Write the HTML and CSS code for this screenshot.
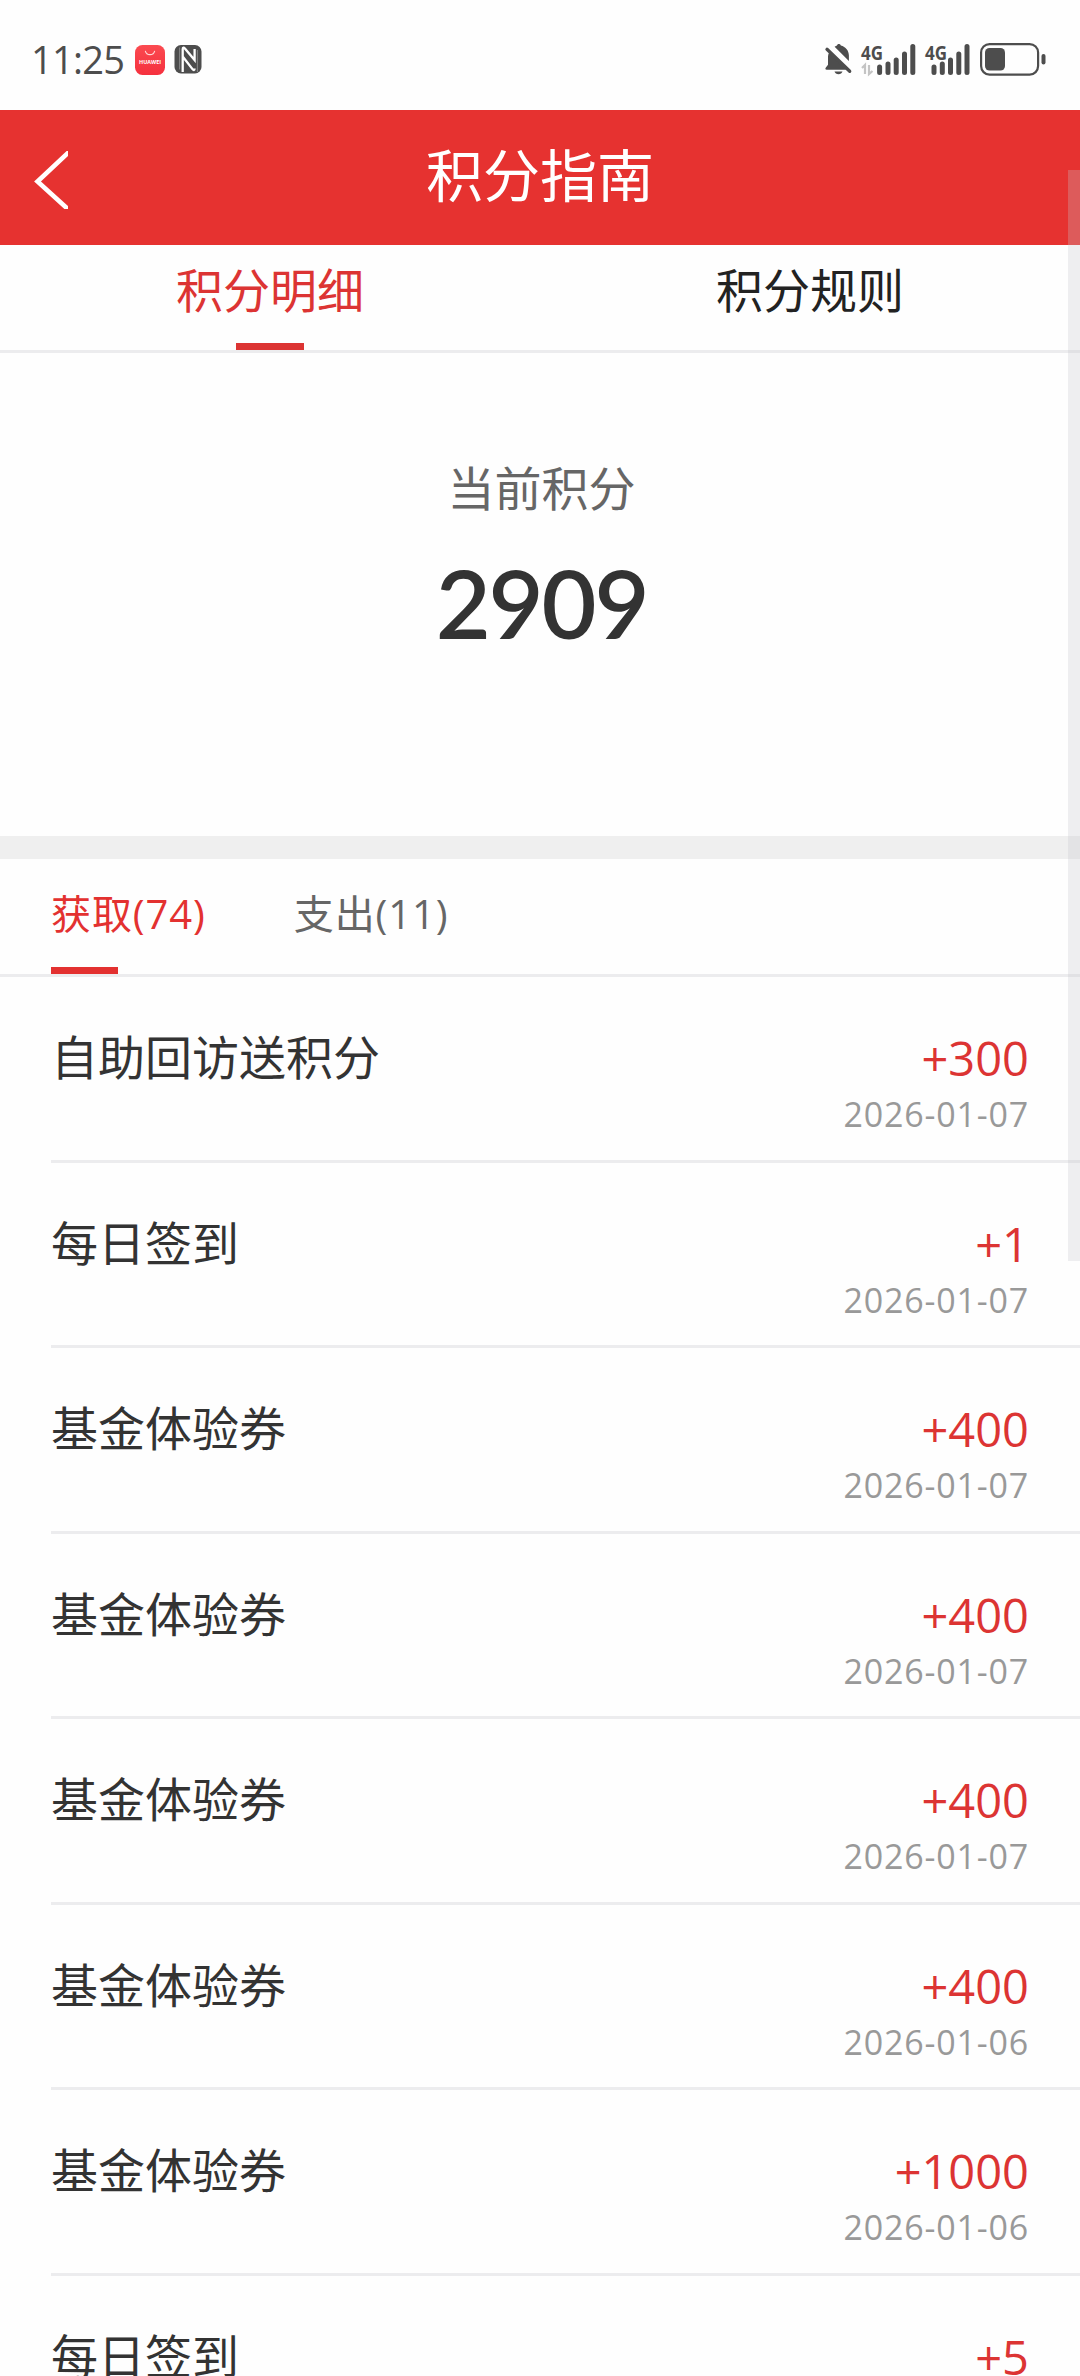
FILE: index.html
```html
<!DOCTYPE html>
<html lang="zh-CN">
<head>
<meta charset="utf-8">
<title>积分指南</title>
<link rel="stylesheet" href="styles.css">
</head>
<body>
<div class="screen">
  <div class="status">
    <span class="clock">11:25</span>
    <svg class="app-icon" width="30" height="30" viewBox="0 0 30 30">
      <defs><linearGradient id="g" x1="0" y1="0" x2="0" y2="1"><stop offset="0" stop-color="#fb4a50"/><stop offset="1" stop-color="#f5303e"/></linearGradient></defs>
      <rect width="30" height="30" rx="7.5" fill="url(#g)"/>
      <path d="M10.3 5.8a4.8 4.8 0 0 0 9.4 0" fill="none" stroke="#ffd5d5" stroke-width="1.1"/>
      <text x="15" y="19.4" text-anchor="middle" textLength="22" lengthAdjust="spacingAndGlyphs" font-size="5.8" font-weight="700" fill="#fff">HUAWEI</text>
    </svg>
    <svg class="nfc-icon" width="28" height="29" viewBox="0 0 28 29">
      <rect x=".5" width="27" height="28.5" rx="6.5" fill="#4d4d4d"/>
      <path d="M8.700 27V4.200c0-2 1.200-2 2.200-.6L20.600 15V4M8.700 11.500l9.800 12.600c1 1.300 2.100 1.300 2.100-.6" fill="none" stroke="#fff" stroke-width="2.300"/>
      <path d="M5.600 2.500v22M23.400 5v22" stroke="#fff" stroke-width="1.100" opacity=".3"/>
    </svg>
    <div class="status-right">
      <svg width="27" height="31" viewBox="0 0 27 31" fill="#4d4d4d">
        <path d="M9.600 2.800c1-.6 1.700-.9 2.400-1.200.3-2 3.400-2 3.800 0 5 1.300 8.100 5.300 8.100 10v5.400zM4.200 8.500 20 23.700l1 2H1.800c-1.600 0-1.800-1.200-.9-2.200L3 20.800v-8.200c0-1.500.4-2.900 1.200-4.100zM9.500 27.600h8c-.7 3.400-7.300 3.400-8 0z"/>
        <path d="M2 5.300 24.700 27.300" stroke="#4d4d4d" stroke-width="3.300" stroke-linecap="round"/>
      </svg>
      <svg class="sig-a" width="56" height="31" viewBox="0 0 56 31">
        <text x="0" y="15.500" textLength="22" lengthAdjust="spacingAndGlyphs" font-size="20" font-weight="700" fill="#4d4d4d">4G</text>
        <path d="M1 24l3-3v9M8 21v9l3.500-3" fill="none" stroke="#c4c4c4" stroke-width="2.200"/>
        <path d="M18.600 23v5.400M27 20v8.400M35.200 16v12.400M43.500 10v18.400M51.800 2.500v25.900" stroke="#4d4d4d" stroke-width="5" stroke-linecap="round"/>
      </svg>
      <svg class="sig-b" width="46" height="31" viewBox="0 0 46 31">
        <text x="0" y="15.500" textLength="22" lengthAdjust="spacingAndGlyphs" font-size="20" font-weight="700" fill="#4d4d4d">4G</text>
        <path d="M9 23v5.400M17.300 20v8.400M25.500 16v12.400M33.800 10v18.400M42 2.500v25.900" stroke="#4d4d4d" stroke-width="5" stroke-linecap="round"/>
      </svg>
      <svg class="battery" width="66" height="33" viewBox="0 0 66 33">
        <rect x="1.100" y="1.100" width="57" height="30.500" rx="8.500" fill="none" stroke="#4d4d4d" stroke-width="2.200"/>
        <rect x="5" y="5" width="20" height="22.500" rx="4.500" fill="#4d4d4d"/>
        <rect x="61.500" y="11" width="4" height="10.500" rx="2" fill="#4d4d4d"/>
      </svg>
    </div>
  </div>

  <header class="navbar">
    <svg class="back" width="34" height="58" viewBox="0 0 34 58"><path d="M36 0 3.500 30.500 36 60" fill="none" stroke="#fff" stroke-width="4.600"/></svg>
    <h1 class="title">积分指南</h1>
  </header>

  <nav class="tabs">
    <div class="tab tab-on">积分明细</div>
    <div class="tab">积分规则</div>
  </nav>

  <section class="summary">
    <div class="summary-label">当前积分</div>
    <div class="summary-value">2909</div>
  </section>

  <nav class="subtabs">
    <div class="subtab subtab-on">获取(74)</div>
    <div class="subtab">支出(11)</div>
  </nav>

  <ul class="list">
    <li class="row"><span class="name">自助回访送积分</span><div class="side"><span class="amount">+300</span><span class="date">2026-01-07</span></div></li>
    <li class="row"><span class="name">每日签到</span><div class="side"><span class="amount">+1</span><span class="date">2026-01-07</span></div></li>
    <li class="row"><span class="name">基金体验券</span><div class="side"><span class="amount">+400</span><span class="date">2026-01-07</span></div></li>
    <li class="row"><span class="name">基金体验券</span><div class="side"><span class="amount">+400</span><span class="date">2026-01-07</span></div></li>
    <li class="row"><span class="name">基金体验券</span><div class="side"><span class="amount">+400</span><span class="date">2026-01-07</span></div></li>
    <li class="row"><span class="name">基金体验券</span><div class="side"><span class="amount">+400</span><span class="date">2026-01-06</span></div></li>
    <li class="row"><span class="name">基金体验券</span><div class="side"><span class="amount">+1000</span><span class="date">2026-01-06</span></div></li>
    <li class="row"><span class="name">每日签到</span><div class="side"><span class="amount">+5</span></div></li>
  </ul>
  <div class="scrollbar"></div>
</div>
</body>
</html>
```
FILE: styles.css
```css
* { box-sizing: border-box; }

body {
  margin: 0;
  background: #fefefe;
  font-family: "Open Sans", "Noto Sans CJK SC", sans-serif;
  color: #333;
}

svg { overflow: visible; }

.screen {
  position: relative;
  width: 1080px;
  height: 2376px;
  overflow: hidden;
}

.status {
  height: 110px;
  padding: 9px 34px 0 31px;
  display: flex;
  align-items: center;
}
.clock {
  width: 104px;
  margin-top: -2px;
  white-space: nowrap;
  font-size: 38px;
  line-height: 50px;
  font-weight: 500;
  letter-spacing: -.7px;
  color: #4d4d4d;
}
.nfc-icon { margin-left: 9px; }
.status-right {
  margin-left: auto;
  display: flex;
  align-items: center;
}
.sig-a { margin-left: 9px; }
.sig-b { margin-left: 8px; }
.battery { margin-left: 9px; }

.navbar {
  height: 135px;
  background: #e63230;
  display: grid;
  grid-template-columns: 140px 1fr 140px;
  align-items: center;
}
.back {
  margin: 4px 0 0 34px;
  overflow: hidden;
}
.title {
  margin: -6px 0 0;
  text-align: center;
  font-size: 57px;
  line-height: 70px;
  font-weight: 400;
  color: #fff;
}

.tabs {
  height: 108px;
  border-bottom: 3px solid #ececee;
  display: flex;
}
.tab {
  flex: 1;
  display: flex;
  flex-direction: column;
  align-items: center;
  padding-top: 15px;
  font-size: 47px;
  line-height: 60px;
  color: #222;
}
.tab-on { color: #dc3433; }
.tab-on::after {
  content: "";
  width: 68px;
  height: 7px;
  margin-top: auto;
  background: #dc3433;
}

.summary {
  height: 506px;
  border-bottom: 23px solid #efefef;
  padding: 105px 0 0 3px;
  text-align: center;
}
.summary-label {
  font-size: 47px;
  line-height: 60px;
  color: #666;
}
.summary-value {
  margin-top: 34px;
  font-family: Lato, sans-serif;
  font-size: 95px;
  line-height: 100px;
  font-weight: 600;
  letter-spacing: -2.2px;
}

.subtabs {
  height: 118px;
  border-bottom: 3px solid #ececee;
  padding-left: 51px;
  display: flex;
  gap: 88px;
}
.subtab {
  display: flex;
  flex-direction: column;
  padding-top: 30px;
  font-size: 40px;
  line-height: 50px;
  letter-spacing: .9px;
  color: #666;
}
.subtab-on { color: #e33130; }
.subtab-on::after {
  content: "";
  width: 67px;
  height: 7px;
  margin-top: auto;
  background: #e33130;
}

.list {
  margin: 0;
  padding: 0 0 0 51px;
  list-style: none;
}
.row {
  height: 185.5px;
  border-bottom: 3px solid #ececee;
  padding: 50px 51px 0 0;
  display: flex;
  justify-content: space-between;
}
.name {
  font-size: 47px;
  line-height: 60px;
}
.side {
  display: flex;
  flex-direction: column;
  align-items: flex-end;
}
.amount {
  margin-top: 1px;
  font-size: 47px;
  line-height: 60px;
  color: #dc3433;
}
.date {
  margin-top: 1px;
  font-size: 34px;
  line-height: 50px;
  letter-spacing: .8px;
  color: #999;
}

.scrollbar {
  position: absolute;
  top: 170px;
  right: 0;
  width: 12px;
  height: 1091px;
  background: rgba(198, 198, 204, .28);
}
```
